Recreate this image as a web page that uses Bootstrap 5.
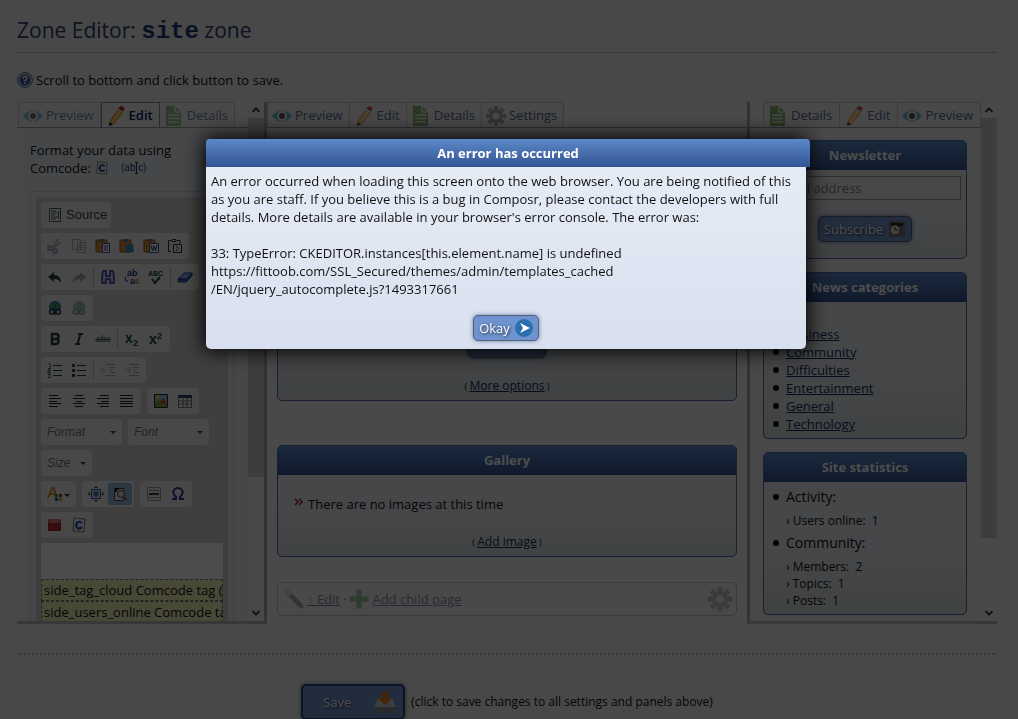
<!DOCTYPE html>
<html lang="en">
<head>
<meta charset="utf-8">
<meta name="viewport" content="width=device-width, initial-scale=1">
<title>Zone Editor: site zone</title>
<link href="https://cdn.jsdelivr.net/npm/bootstrap@5.3.0/dist/css/bootstrap.min.css" rel="stylesheet">
<style>
body{font:13px/18px "Open Sans","Noto Sans",sans-serif;color:#111;background:#f0f0f2;overflow:hidden}
a{color:#0f2d60}
svg{display:block;flex:none}
.page{padding:0 21px 0 17px}
.page-title{font-size:21px;line-height:30px;font-weight:400;color:#2c4272;padding:15px 0 7px;margin:0;border-bottom:1px solid #b4bfdb}
.page-title code{font:bold 24px/24px "Liberation Mono",monospace;color:#1c3b72}
.hint{gap:3px;padding-top:18px;margin:0 0 13px}
.zones{display:grid;grid-template-columns:250px minmax(0,1fr) 250px;height:522px}
.panel{overflow:hidden;min-width:0}
.panel-start{border-right:3px solid #aeaca8;border-bottom:3px solid #bbb}
.panel-end{border-left:3px solid #aeaca8;border-bottom:3px solid #bbb}
.mid{background:#f4f4f6}
.mid-in{padding:13px 10px 0}
.pane{min-width:0;flex:1;overflow:hidden}
.pane-blue{background:#eceff6}
.bar{width:16px;background:#f4f4f4}
.bar svg{height:16px;width:16px}
.thumb{background:#cdcdcd}
.thumb-a{height:359px}
.thumb-b{height:420px}
.tabs{height:26px;border-bottom:1px solid #9a9aa0;background:#f4f4f5}
.panel-start .tabs{padding-left:1px}
.tab{font-size:13px;line-height:18px;padding:3px 6px 3px 4px;gap:3px;border:1px solid #c8c8cc;border-bottom:0;background:#f0f0f2;color:#1c3b72}
.panel-end .tab{padding-right:7px}
.tab + .tab{border-left:0}
.tab > *{opacity:.6}
.mid .tab > *,.panel-end .tab > *{opacity:.75}
.tab.on > *{opacity:1}
.tab.on{border:1px solid #8c8c92;border-bottom:0;font-weight:600;color:#001c55;background:#f4f4f6}
.intro{padding:13px 0 14px 13px}
.editor{margin:0 14px 0 13px;border:1px solid #d0d2d8;border-radius:5px;padding:5px 5px 0}
.editor-in{background:#d3d3d3;padding:5px 5px 0}
.tools{gap:5px 6px}
.grp{height:26px;background:#f1f1f1;border-radius:4px;padding:0 2px}
.tb{width:24px;height:22px;padding:3px 4px;border:0;background:none;border-radius:3px}
.tb-on{background:#8fb8de}
.tb-wide{width:31px}
.src{width:66px;gap:3px;font:13px/16px "Liberation Sans",sans-serif;color:#444}
.sep{width:1px;height:18px;margin:0 2px;background:#bbb}
.off{opacity:.45}
.pick{height:26px;width:81px;border:0;border-radius:4px;background:#f1f1f1 url("data:image/svg+xml,%3Csvg xmlns='http://www.w3.org/2000/svg' width='6' height='3'%3E%3Cpath d='M0 0h6l-3 3z' fill='%23444'/%3E%3C/svg%3E") no-repeat right 6px center;appearance:none;font:italic 12px/16px "Liberation Sans",sans-serif;color:#777;padding:0 6px}
.pick-s{width:51px}
.doc{height:90px;background:#fff;padding-top:36px;overflow:hidden}
.doc div{border:1px dashed #777;background:#f2f2ba;white-space:nowrap;line-height:20px;padding:0 2px}
.box{border:1px solid #4b6ba5;border-radius:5px;overflow:hidden;background:linear-gradient(#f0f0f4,#e9ecf0 60%,#d6dde2)}
.box h2{margin:0;font-size:13px;line-height:29px;font-weight:700;text-align:center;color:#fff;background:linear-gradient(#5c89c9,#335493)}
.go{background:#6f93ce;color:#fff;border:1px solid #555f78;border-radius:5px;font-size:13px;line-height:18px;padding:3px 5px;gap:5px;text-shadow:1px 1px 3px #223;box-shadow:0 0 4px #6680a8}
.go-search{width:78px;height:27px}
.note{font-size:9px;line-height:16px;padding-bottom:5px}
.note a{font-size:12px}
.search-box{height:260px}
.gallery{height:112px;margin-top:44px}
.foot{height:34px;margin-top:25px;border:1px solid #c4c4c8;border-radius:5px;padding:0 4px 0 6px;gap:3px}
.foot > *{opacity:.5}
.sidebox{margin:0 14px 13px 13px}
.mail-row{padding:6px 5px 4px 4px}
.mail{border:1px solid #999;height:24px;background:#f1f1f3;padding:0 8px;font-size:13px}
.mail::placeholder{color:#808080;opacity:1}
.cats{list-style:none;margin:0;padding:23px 0 5px 22px}
.cats li::before,.stats > li::before{content:"";display:inline-block;width:6px;height:6px;border-radius:50%;background:#111;margin:0 7px 0 -13px;vertical-align:2px}
.stats{list-style:none;margin:0;padding:6px 0 0 22px;font-size:14px}
.stats ul{list-style:none;margin:0;padding:6px 0 5px;font-size:12px;line-height:17px}
.dots{border-top:2px dotted #aab4cc;margin:29px 0}
.save{width:104px;height:36px;border:2px solid #2c456f;padding:0 6px 0 20px}
.save-row{gap:6px;font-size:12px}
.modal-backdrop.show{opacity:.7}
.modal{padding-right:6px}
.modal-dialog{max-width:600px;margin:139px auto 0}
.modal-content{border:0;border-radius:5px;background:linear-gradient(#e8eef7,#d8dfee);box-shadow:0 0 20px 2px #000;color:#111}
.err-title{margin:0 -4px 0 0;border-radius:4px 4px 0 0;background:linear-gradient(#5c89c9,#335493);color:#fff;font-size:13px;font-weight:700;line-height:28px;text-align:center}
.err-text{padding:5px 5px 8px}
.err-text p{margin:0 0 18px}
.err-text p:last-of-type{margin:0 0 17px}
</style>
</head>
<body class="modal-open">
<svg width="0" height="0" class="position-absolute" aria-hidden="true">
<symbol id="eye" viewBox="0 0 20 20"><path d="M0 10Q10-1 20 10 10 21 0 10Z" fill="#2fa6cf"/><circle cx="10" cy="10" r="5" fill="#f4f4f4"/><circle cx="10" cy="10" r="3" fill="#222"/></symbol>
<symbol id="pen" viewBox="0 0 20 20"><path d="M11 4l6 3-9 11-5 2 1-6z" fill="#e8a33c"/><path d="M13 5l2 1-8 11-2-1z" fill="#ffd58a"/><path d="M12 3l2-2.500q3-1 4.500 2L17 6z" fill="#c62020"/><path d="M11.300 4l5 3 .9-1.300-5-3z" fill="#ddd"/><path d="M3 20l.7-4 3 2.400z" fill="#111"/></symbol>
<symbol id="doc" viewBox="0 0 20 20"><path d="M2 0h9l6 6v14H2z" fill="#5da044"/><path d="M11 0v6h6M4 9h11M4 12.500h11M4 16h11" stroke="#e7f2e1" stroke-width="1.500" fill="none"/></symbol>
<symbol id="gear" viewBox="0 0 24 24"><g fill="#8b95a3"><circle cx="12" cy="12" r="8"/><path d="M9.500 0h5v24h-5z"/><path d="M9.500 0h5v24h-5z" transform="rotate(45 12 12)"/><path d="M9.500 0h5v24h-5z" transform="rotate(90 12 12)"/><path d="M9.500 0h5v24h-5z" transform="rotate(135 12 12)"/></g><circle cx="12" cy="12" r="4" fill="#eee"/></symbol>
<symbol id="up" viewBox="0 0 16 16"><path d="M4.500 10L8 6.500l3.500 3.500" stroke="#444" stroke-width="2" fill="none"/></symbol>
<symbol id="down" viewBox="0 0 16 16"><path d="M4.500 6L8 9.500 11.500 6" stroke="#444" stroke-width="2" fill="none"/></symbol>
<symbol id="com" viewBox="0 0 16 16"><path d="M3 1l11 1-1 13-11-1z" fill="#eef" stroke="#777"/><path d="M11 6Q8 3.500 6 6T7 11.500q2.500.5 4-1.500" fill="none" stroke="#1746a0" stroke-width="2.200"/></symbol>
<symbol id="paste" viewBox="0 0 16 16"><rect x="1" y="2" width="11" height="12" rx="1" fill="#d58f3c" stroke="#8e5a1c"/><path d="M4 1h5v3H4z" fill="#777"/></symbol>
<symbol id="globe" viewBox="0 0 16 16"><circle cx="8" cy="7" r="6" fill="#2c62b4"/><path d="M4 3q4-2 4 1T5 8 3 6zM10 3l3 3-1 4-3-3z" fill="#39a43c"/><path d="M4.500 10h2a2 2 0 010 4h-2a2 2 0 010-4zM9.500 10h2a2 2 0 010 4h-2a2 2 0 010-4zM6 12h4" stroke="#1d3c46" stroke-width="1.600" fill="#ddd"/></symbol>
</svg>

<main class="page">
<h1 class="page-title">Zone Editor: <code>site</code> zone</h1>
<p class="hint d-flex align-items-center">
<svg width="16" height="16" viewBox="0 0 16 16"><circle cx="8" cy="8" r="7.400" fill="#dde5f3" stroke="#41629c"/><circle cx="8" cy="8" r="5.700" fill="#41629c"/><path d="M6 6.500q0-2 2-2t2 1.700Q10 7.500 8 8.500v1M8 10.500v1.500" stroke="#fff" stroke-width="1.400" fill="none"/></svg>
<span>Scroll to bottom and click button to save.</span></p>

<div class="zones">
<section class="panel panel-start d-flex">
<div class="pane pane-blue">
<nav class="tabs d-flex">
<a href="#" class="tab d-flex text-decoration-none"><svg width="20" height="20"><use href="#eye"/></svg><span>Preview</span></a>
<a href="#" class="tab on d-flex text-decoration-none"><svg width="20" height="20"><use href="#pen"/></svg><span>Edit</span></a>
<a href="#" class="tab d-flex text-decoration-none"><svg width="20" height="20"><use href="#doc"/></svg><span>Details</span></a>
</nav>
<div class="intro"><div>Format your data using</div>
<div class="d-flex align-items-center gap-1"><span>Comcode:</span><svg width="14" height="14"><use href="#com"/></svg><svg class="ms-2" width="26" height="14" viewBox="0 0 26 14" font-family="Liberation Sans,sans-serif" font-size="10" fill="#1c3b72"><text x="0" y="10">(ab</text><text x="17" y="10">c)</text><path d="M15.500 2v10M14 1.500h3M14 12.500h3" stroke="#1c3b72"/></svg></div></div>
<div class="editor"><div class="editor-in">
<div class="tools d-flex flex-column">
<div class="d-flex"><div class="grp d-flex align-items-center"><button class="tb src d-flex"><svg width="16" height="16" viewBox="0 0 16 16"><path d="M2.500 1.500h11v13h-11z" fill="#fff" stroke="#555"/><path d="M4 4h5M4 6h6M4 8h4M4 10h7M4 12h5M11.500 4v8" stroke="#366"/></svg>Source</button></div></div>
<div class="d-flex"><div class="grp d-flex align-items-center">
<button class="tb off" aria-label="Cut"><svg width="16" height="16" fill="none" stroke="#35539a" stroke-width="2"><path d="M11 1L6 10M14 4l-8 6" stroke="#777"/><circle cx="3" cy="10" r="2"/><circle cx="8" cy="13" r="2"/></svg></button>
<button class="tb off" aria-label="Copy"><svg width="16" height="16" fill="#eee" stroke="#666"><path d="M1.500 1.500h8v10h-8zM6.500 4.500h8v10h-8zM8 7.500h5M8 9.500h5M8 11.500h5"/></svg></button>
<button class="tb" aria-label="Paste"><svg width="16" height="16"><use href="#paste"/><path d="M7.500 5.500h7v9h-7zM9 8h4M9 10h4M9 12h4" fill="#fff" stroke="#3b50a0"/></svg></button>
<button class="tb" aria-label="Paste code"><svg width="16" height="16"><use href="#paste"/><path d="M6 7l8-1 1 8-7 1z" fill="#2f8fb5"/></svg></button>
<button class="tb" aria-label="Paste from Word"><svg width="16" height="16"><use href="#paste"/><path d="M6.500 5.500h9v9h-9z" fill="#fff" stroke="#3b50a0"/><path d="M8 7l1.500 6L11 8l1.500 5L14 7" fill="none" stroke="#244"/></svg></button>
<button class="tb" aria-label="Paste as text"><svg width="16" height="16" fill="none" stroke="#333"><path d="M4 13.500H1.500v-11h3M10 2.500h3v3M5 1.500h4v2H5zM6.500 6.500h8v8h-8zM9 8l2.500 2.500L9 13"/></svg></button></div></div>
<div class="d-flex"><div class="grp d-flex align-items-center">
<button class="tb" aria-label="Undo"><svg width="16" height="16" fill="#244"><path d="M1 8l6-5v3q7 0 7 8-2-4-7-4v3z"/></svg></button>
<button class="tb off" aria-label="Redo"><svg width="16" height="16" fill="#556"><path d="M15 8L9 3v3q-7 0-7 8 2-4 7-4v3z"/></svg></button><span class="sep"></span>
<button class="tb" aria-label="Find"><svg width="16" height="16" fill="#cfd6ff" stroke="#26369a" stroke-width="1.500"><path d="M3 2h3v5h4V2h3l1 6v6h-4v-4H6v4H2V8z"/></svg></button>
<button class="tb" aria-label="Replace"><svg width="16" height="16" font-family="Liberation Sans,sans-serif" font-size="9" font-weight="700" fill="#26369a"><text x="3" y="7">ab</text><text x="6" y="15">a<tspan fill="#c97f1e">c</tspan></text><path d="M1.500 8v4H4" fill="none" stroke="#26369a"/></svg></button>
<button class="tb" aria-label="Spell check"><svg width="16" height="16" font-family="Liberation Sans,sans-serif" font-size="7" font-weight="700" fill="#244"><text x="0" y="7">ABC</text><path d="M4 10l3 4 5-6" fill="none" stroke="#244" stroke-width="2"/></svg></button><span class="sep"></span>
<button class="tb" aria-label="Remove format"><svg width="16" height="16" stroke="#26429a"><path d="M1 10l6-6h8l-6 6z" fill="#8fa9e6"/><path d="M1 10h8l6-6v3l-6 6H1z" fill="#3f5fb8"/></svg></button></div></div>
<div class="d-flex"><div class="grp d-flex align-items-center"><button class="tb" aria-label="Link"><svg width="16" height="16"><use href="#globe"/></svg></button><button class="tb off" aria-label="Unlink"><svg width="16" height="16"><use href="#globe"/></svg></button></div></div>
<div class="d-flex"><div class="grp d-flex align-items-center">
<button class="tb" aria-label="Bold"><svg width="16" height="16" fill="none" stroke="#244" stroke-width="2.500"><path d="M4 3h5a2 2 0 010 5H5M9 8a2 2 0 010 5H4M5 3v10"/></svg></button>
<button class="tb" aria-label="Italic"><svg width="16" height="16" fill="none" stroke="#244" stroke-width="2"><path d="M7 3h5M4 13h5M9.500 3l-3 10"/></svg></button>
<button class="tb" aria-label="Strike"><svg width="16" height="16" font-family="Liberation Sans,sans-serif" font-size="9" fill="#355"><text x="1" y="11">abc</text><path d="M0 8.500h16" stroke="#355"/></svg></button><span class="sep"></span>
<button class="tb" aria-label="Subscript"><svg width="16" height="16" font-family="Liberation Sans,sans-serif" font-weight="700" fill="#244"><text x="1" y="12" font-size="14">x</text><text x="9" y="15" font-size="9">2</text></svg></button>
<button class="tb" aria-label="Superscript"><svg width="16" height="16" font-family="Liberation Sans,sans-serif" font-weight="700" fill="#244"><text x="1" y="13" font-size="14">x</text><text x="9" y="8" font-size="9">2</text></svg></button></div></div>
<div class="d-flex"><div class="grp d-flex align-items-center">
<button class="tb" aria-label="Numbered list"><svg width="16" height="16" fill="none" stroke="#244"><path d="M6 3.500h9M6 8.500h9M6 13.500h9M2 1.500h1v4M1 6.500h2v2H1v2h3M1 12.500h2v3H1"/></svg></button>
<button class="tb" aria-label="Bulleted list"><svg width="16" height="16" fill="#244" stroke="#244"><path d="M6 3.500h9M6 8.500h9M6 13.500h9M1.500 2.500h2v2h-2zM1.500 7.500h2v2h-2zM1.500 12.500h2v2h-2z"/></svg></button><span class="sep"></span>
<button class="tb off" aria-label="Outdent"><svg width="16" height="16" fill="none" stroke="#566"><path d="M5 2.500h10M9 5.500h6M9 8h4M9 10.500h6M5 13.500h10"/><path d="M7 8H1m2.500-3L1 8l2.500 3" stroke="#c25a20"/></svg></button>
<button class="tb off" aria-label="Indent"><svg width="16" height="16" fill="none" stroke="#566"><path d="M5 2.500h10M9 5.500h6M9 8h4M9 10.500h6M5 13.500h10"/><path d="M1 8h6M4.500 5L7 8l-2.500 3" stroke="#c25a20"/></svg></button></div></div>
<div class="d-flex tools"><div class="grp d-flex align-items-center">
<button class="tb" aria-label="Align left"><svg width="16" height="16" stroke="#222"><path d="M2 2.500h9M2 5.500h12M2 8.500h8M2 10.500h12M2 13.500h9"/></svg></button>
<button class="tb" aria-label="Centre"><svg width="16" height="16" stroke="#222"><path d="M4 2.500h8M2 5.500h12M5 8.500h6M2 10.500h12M4 13.500h8"/></svg></button>
<button class="tb" aria-label="Align right"><svg width="16" height="16" stroke="#222"><path d="M5 2.500h9M2 5.500h12M6 8.500h8M2 10.500h12M5 13.500h9"/></svg></button>
<button class="tb" aria-label="Justify"><svg width="16" height="16" stroke="#222"><path d="M1 2.500h13M1 5.500h13M1 8.500h13M1 10.500h13M1 13.500h13"/></svg></button></div>
<div class="grp d-flex align-items-center">
<button class="tb" aria-label="Image"><svg width="16" height="16"><path d="M1.500 1.500h13v13h-13z" fill="#8fc3e4" stroke="#222"/><path d="M2 10l4-4 8 5v3H2z" fill="#80a83c"/><circle cx="5" cy="4" r="2" fill="#edc35c"/><path d="M7 8l3-3 3 3v3H8z" fill="#c85d2a"/></svg></button>
<button class="tb" aria-label="Table"><svg width="16" height="16"><path d="M1.500 2.500h13v12h-13zM6 3v11M10 3v11M2 8h12M2 11h12" fill="#fff" stroke="#777"/><path d="M1 2h14v3H1z" fill="#33447c"/></svg></button></div></div>
<div class="d-flex tools"><select class="pick" aria-label="Format"><option>Format</option></select><select class="pick" aria-label="Font"><option>Font</option></select></div>
<div class="d-flex"><select class="pick pick-s" aria-label="Size"><option>Size</option></select></div>
<div class="d-flex tools"><div class="grp d-flex align-items-center"><button class="tb tb-wide" aria-label="Text colour"><svg width="24" height="16"><path d="M1 12L5 2h2l2 10M3 8h5" fill="none" stroke="#dc9328" stroke-width="2"/><path d="M8 8h3v3H8z" fill="#393"/><path d="M12 8h3v3h-3z" fill="#c22"/><path d="M8 12h3v3H8z" fill="#25b"/><path d="M12 12h3v3h-3z" fill="#da2"/><path d="M17 8h6l-3 3z" fill="#333"/></svg></button></div>
<div class="grp d-flex align-items-center"><button class="tb" aria-label="Maximize"><svg width="16" height="16"><path d="M3.500 3.500h9v9h-9z" fill="#cfe0ff" stroke="#26569a"/><path d="M5.500 5.500h5v5h-5z" fill="#4576c4"/><path d="M8 0l2 2H6zM8 16l-2-2h4zM0 8l2-2v4zM16 8l-2 2V6z" fill="#244"/></svg></button>
<button class="tb tb-on" aria-label="Show blocks"><svg width="16" height="16"><path d="M2.500 2.500h9v12h-9z" fill="#eee" stroke="#444"/><path d="M4 6V3h3" fill="none" stroke="#111" stroke-width="2"/><circle cx="9" cy="8" r="3.500" fill="#ddd" stroke="#444"/><path d="M11 11l4 3" stroke="#a05a1c" stroke-width="2"/></svg></button></div>
<div class="grp d-flex align-items-center"><button class="tb" aria-label="Rule"><svg width="16" height="16"><path d="M1.500 1.500h13v13h-13zM3 4.500h10M3 11.500h10" fill="#eee" stroke="#999"/><path d="M3 8h10" stroke="#244" stroke-width="2"/></svg></button>
<button class="tb" aria-label="Symbol"><svg width="16" height="16"><path d="M2 13h4v-2Q1 6 5 3q3-2 6 0 4 3-1 8v2h4" fill="none" stroke="#26369a" stroke-width="2"/></svg></button></div></div>
<div class="d-flex"><div class="grp d-flex align-items-center"><button class="tb" aria-label="Block"><svg width="16" height="16"><path d="M1 2h13v12H1z" fill="#b12c2c"/><path d="M1 2h13l-1 4H2z" fill="#e07a7a"/></svg></button><button class="tb" aria-label="Comcode"><svg width="16" height="16"><use href="#com"/></svg></button></div></div>
<div class="doc"><div>side_tag_cloud Comcode tag (dbl-click to edit)</div><div>side_users_online Comcode tag (dbl-click to edit)</div></div>
</div></div></div>
</div>
<div class="bar d-flex flex-column"><svg><use href="#up"/></svg><div class="thumb thumb-a"></div><svg class="mt-auto"><use href="#down"/></svg></div>
</section>

<section class="panel mid">
<nav class="tabs d-flex">
<a href="#" class="tab d-flex text-decoration-none"><svg width="20" height="20"><use href="#eye"/></svg><span>Preview</span></a>
<a href="#" class="tab d-flex text-decoration-none"><svg width="20" height="20"><use href="#pen"/></svg><span>Edit</span></a>
<a href="#" class="tab d-flex text-decoration-none"><svg width="20" height="20"><use href="#doc"/></svg><span>Details</span></a>
<a href="#" class="tab d-flex text-decoration-none"><svg width="20" height="20"><use href="#gear"/></svg><span>Settings</span></a>
</nav>
<div class="mid-in">
<div class="box search-box d-flex flex-column">
<div class="mt-auto d-flex justify-content-center"><button class="go go-search" aria-label="Search"></button></div>
<div class="note text-center pt-3 mt-1">( <a href="#">More options</a> )</div></div>
<div class="box gallery d-flex flex-column"><h2>Gallery</h2>
<div class="d-flex gap-1 ps-3 pt-3 mt-1"><svg width="10" height="16" viewBox="0 0 10 16"><path d="M1 4l3 3-3 3M5 4l3 3-3 3" stroke="#b02020" stroke-width="1.500" fill="none"/></svg><span>There are no images at this time</span></div>
<div class="note text-center mt-auto">( <a href="#">Add image</a> )</div></div>
<div class="foot d-flex align-items-center"><svg width="20" height="20" viewBox="0 0 20 20"><path d="M1 3l3-2 13 13 2 5-5-2z" fill="#4a7a3a" stroke="#444"/><path d="M1 3l3-2 4 4-3 2z" fill="#ddd"/></svg><a href="#">↑ Edit</a><span>·</span><svg width="20" height="20" viewBox="0 0 20 20"><path d="M8 1h4v7h7v4h-7v7H8v-7H1V8h7z" fill="#3aa03a" stroke="#3aa03a" stroke-linejoin="round"/></svg><a href="#">Add child page</a><svg class="ms-auto" width="24" height="24"><use href="#gear"/></svg></div>
</div>
</section>

<section class="panel panel-end d-flex">
<div class="pane">
<nav class="tabs d-flex justify-content-end mb-2">
<a href="#" class="tab d-flex text-decoration-none"><svg width="20" height="20"><use href="#doc"/></svg><span>Details</span></a>
<a href="#" class="tab d-flex text-decoration-none"><svg width="20" height="20"><use href="#pen"/></svg><span>Edit</span></a>
<a href="#" class="tab d-flex text-decoration-none"><svg width="20" height="20"><use href="#eye"/></svg><span>Preview</span></a>
</nav>
<div class="pt-1">
<div class="box sidebox"><h2>Newsletter</h2><div class="mail-row"><input class="mail w-100 d-block" type="email" placeholder="Email address" aria-label="Email address"></div>
<div class="d-flex justify-content-center pt-2 pb-3 mt-1"><button class="go d-flex align-items-center">Subscribe<svg width="18" height="18" viewBox="0 0 18 18"><path d="M1 1h16v16H1z" fill="#777"/><path d="M3 3h12v3H3z" fill="#222"/><circle cx="7" cy="10" r="5" fill="#ddd" stroke="#555"/><path d="M7 7v3h3" stroke="#333" fill="none"/></svg></button></div></div>
<div class="box sidebox"><h2>News categories</h2><ul class="cats"><li><a href="#">Business</a></li><li><a href="#">Community</a></li><li><a href="#">Difficulties</a></li><li><a href="#">Entertainment</a></li><li><a href="#">General</a></li><li><a href="#">Technology</a></li></ul></div>
<div class="box sidebox"><h2>Site statistics</h2><ul class="stats"><li>Activity:<ul><li>› Users online:&nbsp; 1</li></ul></li><li>Community:<ul><li>› Members:&nbsp; 2</li><li>› Topics:&nbsp; 1</li><li>› Posts:&nbsp; 1</li></ul></li></ul></div>
</div>
</div>
<div class="bar d-flex flex-column"><svg><use href="#up"/></svg><div class="thumb thumb-b"></div><svg class="mt-auto"><use href="#down"/></svg></div>
</section>
</div>

<hr class="dots opacity-100">
<div class="save-row d-flex align-items-center justify-content-center">
<button class="go save d-flex align-items-center justify-content-between">Save<svg width="24" height="24" viewBox="0 0 24 24"><path d="M5 8h14l4 9H1z" fill="#c9cbd0"/><path d="M1 18h22v5H1z" fill="#8d8f88"/><path d="M9 1h6v7h4l-7 7-7-7h4z" fill="#e07818"/></svg></button>
<span>(click to save changes to all settings and panels above)</span></div>
</main>

<div class="modal-backdrop show"></div>
<div class="modal show d-block" role="dialog" aria-labelledby="errTitle">
<div class="modal-dialog"><div class="modal-content">
<h2 class="err-title" id="errTitle">An error has occurred</h2>
<div class="err-text">
<p>An error occurred when loading this screen onto the web browser. You are being notified of this as you are staff. If you believe this is a bug in Composr, please contact the developers with full details. More details are available in your browser's error console. The error was:</p>
<p>33: TypeError: CKEDITOR.instances[this.element.name] is undefined<br>https://fittoob.com/SSL_Secured/themes/admin/templates_cached<br>/EN/jquery_autocomplete.js?1493317661</p>
<div class="d-flex justify-content-center"><button class="go d-flex align-items-center">Okay<svg width="18" height="18" viewBox="0 0 18 18"><circle cx="9" cy="9" r="9" fill="#2a6fae"/><path d="M5 4l10 5-10 5 3-5z" fill="#fff"/></svg></button></div>
</div></div></div></div>
<script src="https://cdn.jsdelivr.net/npm/bootstrap@5.3.0/dist/js/bootstrap.bundle.min.js"></script>
</body>
</html>
